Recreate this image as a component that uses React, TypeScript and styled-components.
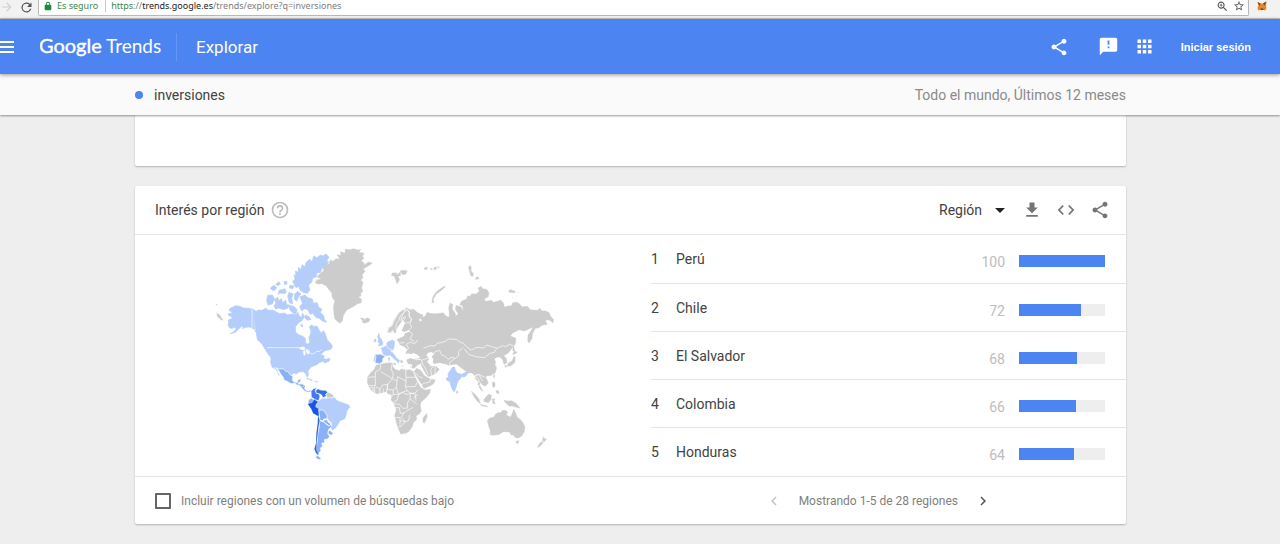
import React from "react";
import styled, { createGlobalStyle } from "styled-components";

const BLUE = "#4c84f1";

const GlobalStyle = createGlobalStyle`
  * { box-sizing: border-box; }
  body {
    margin: 0;
    background: #eeeeee;
    color: #424242;
    font-family: Roboto, "Liberation Sans", sans-serif;
    font-size: 14px;
    line-height: 20px;
  }
  button, select, input { font: inherit; color: inherit; }
`;

/* ---------- Browser bar ---------- */

const BrowserBar = styled.div`
  display: flex;
  height: 19px;
  padding-right: 11px;
  background: #f2f2f2;
  border-bottom: 1px solid #c6c6c6;
  font-family: "Noto Sans", sans-serif;
  font-size: 9px;
  line-height: 12px;
`;

const NavButtons = styled.div`
  display: flex;
  gap: 5px;
  width: 38px;
`;

const AddressBar = styled.div`
  display: flex;
  flex: 1;
  align-items: center;
  height: 16px;
  padding: 0 2px 3px 4px;
  background: #fff;
  border: solid #b8b8b8;
  border-width: 0 1px 1px;
  border-radius: 0 0 2px 2px;
  color: #808080;
`;

const Secure = styled.span`
  margin-left: 4px;
  padding-right: 7px;
  border-right: 1px solid #c8c8c8;
  color: #3c8a4a;
`;

const Url = styled.span`
  flex: 1;
  padding-left: 5px;
`;

const Scheme = styled.span`
  color: #3c8a4a;
`;

const LockBadge = styled.span`
  display: grid;
  color: #1e8a3c;
`;

const Host = styled.span`
  color: #222;
`;

const BarButton = styled.button`
  display: grid;
  place-items: center;
  width: 14px;
  height: 12px;
  padding: 0;
  border: 0;
  background: none;
  color: #555;

  &:disabled { color: #cfcfcf; }
`;

const BarTools = styled.div`
  display: flex;
  gap: 3px;
`;

const Extension = styled(BarButton)`
  margin-left: 6px;
`;

/* ---------- App header ---------- */

const Header = styled.header`
  position: relative;
  z-index: 2;
  display: flex;
  align-items: center;
  height: 55px;
  padding-right: 21px;
  background: ${BLUE};
  box-shadow: 0 1px 4px rgba(0, 0, 0, 0.4);
  color: #fff;
`;

const IconButton = styled.button<{ $size?: number }>`
  display: grid;
  place-items: center;
  width: ${(p) => p.$size ?? 24}px;
  height: ${(p) => p.$size ?? 24}px;
  padding: 0;
  border: 0;
  background: none;
  color: inherit;
  cursor: pointer;

  &:disabled { color: #c4c4c4; }
`;

const MenuButton = styled(IconButton)`
  width: 40px;
  justify-items: start;
`;

const Logo = styled.a`
  display: flex;
  align-items: center;
  width: 137px;
  height: 28px;
  border-right: 1px solid #6496f4;
  color: #fff;
  text-decoration: none;
`;

const Section = styled.h1`
  flex: 1;
  margin: 0;
  padding-left: 19px;
  font-size: 17px;
  font-weight: 400;
  line-height: 24px;
`;

const HeaderTools = styled.div`
  display: flex;
  align-items: center;
  gap: 12px;
`;

const ShareTool = styled(IconButton)`
  margin-right: 14px;
`;

const SignIn = styled.button`
  margin-left: 4px;
  padding: 6px 8px;
  border: 0;
  background: none;
  font-family: "Liberation Sans", Arial, sans-serif;
  font-size: 11px;
  font-weight: 700;
  line-height: 16px;
  cursor: pointer;
`;

/* ---------- Query strip and cards ---------- */

const QueryBar = styled.div`
  position: relative;
  z-index: 1;
  display: flex;
  align-items: center;
  justify-content: space-between;
  height: 41px;
  padding: 0 154px 0 135px;
  background: #fafafa;
  box-shadow: 0 1px 2px rgba(0, 0, 0, 0.4);
`;

const Term = styled.span`
  display: flex;
  align-items: center;
  gap: 11px;

  &::before {
    content: "";
    width: 8px;
    height: 8px;
    border-radius: 50%;
    background: ${BLUE};
  }
`;

const Scope = styled.span`
  color: #8a8a8a;
`;

const Main = styled.main`
  display: flex;
  flex-direction: column;
  gap: 20px;
  padding: 0 154px 20px 135px;
`;

const Card = styled.section`
  background: #fff;
  border-radius: 2px;
  box-shadow: 0 1px 2px rgba(0, 0, 0, 0.25);
`;

const ChartCardEnd = styled(Card)`
  height: 51px;
`;

const CardHeader = styled.div`
  display: flex;
  align-items: center;
  height: 49px;
  padding: 0 14px 0 20px;
  border-bottom: 1px solid #e4e4e4;
`;

const CardTitle = styled.h2`
  margin: 0 6px 0 0;
  font-size: 14px;
  font-weight: 400;
`;

const Help = styled(IconButton)`
  color: #bdbdbd;
`;

const CardTools = styled.div`
  display: flex;
  align-items: center;
  gap: 10px;
  margin-left: auto;
  color: #757575;
`;

const SelectBox = styled.label`
  display: grid;
  grid-template-columns: 1fr 10px;
  align-items: center;
  width: 66px;
  margin-right: 5px;
  color: #424242;
`;

const Select = styled.select`
  grid-area: 1 / 1 / 2 / 3;
  width: 100%;
  padding: 0;
  border: 0;
  appearance: none;
  background: none;
`;

const Caret = styled.span`
  grid-area: 1 / 2;
  border: 5px solid transparent;
  border-top-color: #222;
  border-bottom: 0;
  pointer-events: none;
`;

const CardBody = styled.div`
  display: grid;
  grid-template-columns: 516px 1fr;
  padding-bottom: 1px;
`;

const Map = styled.svg`
  display: block;
  width: 350px;
  height: 225px;
  margin: 5px 0 0 75px;
`;

const Ranking = styled.table`
  width: 100%;
  border-collapse: collapse;

  tr + tr { border-top: 1px solid #e4e4e4; }
  td { height: 48px; padding: 0; vertical-align: top; }
`;

const Rank = styled.td`
  width: 25px;
  && { padding-top: 14px; }
`;

const Region = styled.td`
  && { padding-top: 14px; }
`;

const Score = styled.td`
  width: 60px;
  color: #bdbdbd;
  text-align: right;
  && { padding: 17px 14px 0 0; }
`;

const BarCell = styled.td`
  width: 107px;
  && { padding: 20px 21px 0 0; }
`;

const Track = styled.div`
  height: 12px;
  background: #eeeeee;
`;

const Fill = styled.div`
  height: 12px;
  background: ${BLUE};
`;

const CardFooter = styled.div`
  display: flex;
  align-items: center;
  justify-content: space-between;
  height: 48px;
  padding: 0 131px 0 20px;
  border-top: 1px solid #e4e4e4;
  color: #808080;
  font-size: 12px;
`;

const CheckLabel = styled.label`
  display: flex;
  align-items: center;
  gap: 10px;
`;

const Checkbox = styled.input`
  width: 16px;
  height: 16px;
  margin: 0;
  border: 2px solid #666;
  border-radius: 1px;
  appearance: none;

  &:checked { background: ${BLUE}; }
`;

const Pager = styled.nav`
  display: flex;
  align-items: center;
  gap: 13px;
`;

const Next = styled(IconButton)`
  color: #555;
`;

/* ---------- Icons ---------- */

const Icon = ({ d, size = 24 }: { d: string; size?: number }) => (
  <svg width={size} height={size} viewBox="0 0 24 24" fill="currentColor" aria-hidden="true">
    <path d={d} />
  </svg>
);

const icons = {
  forward: "M12 4l-1.400 1.400L16.200 11H4v2h12.200l-5.600 5.600L12 20l8-8z",
  reload: "M17.650 6.350A8 8 0 1 0 19.730 14h-2.080A6 6 0 1 1 12 6c1.660 0 3.140.690 4.220 1.780L13 11h7V4z",
  lock: "M18 9h-1V7A5 5 0 0 0 7 7v2H6a2 2 0 0 0-2 2v9a2 2 0 0 0 2 2h12a2 2 0 0 0 2-2v-9a2 2 0 0 0-2-2zM9 9V7a3 3 0 0 1 6 0v2z",
  zoom: "M15.500 14h-.8l-.3-.3A6.500 6.500 0 1 0 13.700 14.400l.3.3v.8l5 5 1.500-1.500zM9.500 14a4.500 4.500 0 1 1 0-9 4.500 4.500 0 0 1 0 9zM8.700 7h1.600v1.700H12v1.600h-1.700V12H8.700v-1.700H7V8.700h1.700z",
  star: "M22 9.240l-7.190-.62L12 2 9.190 8.630 2 9.240l5.460 4.730L5.820 21 12 17.270 18.180 21l-1.630-7.030zM12 15.400l-3.760 2.270 1-4.280-3.320-2.880 4.380-.38L12 6.100l1.710 4.040 4.380.38-3.320 2.880 1 4.280z",
  share:
    "M18 16.080c-.76 0-1.440.3-1.960.77L8.910 12.700c.05-.23.09-.46.09-.7s-.04-.47-.09-.7l7.050-4.110c.54.5 1.250.81 2.040.81 1.660 0 3-1.340 3-3s-1.340-3-3-3-3 1.340-3 3c0 .24.04.47.09.7L8.040 9.810C7.500 9.310 6.790 9 6 9c-1.660 0-3 1.340-3 3s1.340 3 3 3c.79 0 1.500-.31 2.040-.81l7.120 4.160c-.05.21-.08.43-.08.65 0 1.610 1.310 2.920 2.920 2.920s2.920-1.310 2.920-2.920-1.310-2.920-2.920-2.920z",
  feedback: "M20 2H4c-1.100 0-2 .9-2 2v18l4-4h14c1.100 0 2-.9 2-2V4c0-1.100-.9-2-2-2zm-7 12h-2v-2h2zm0-4h-2V5h2z",
  apps: "M4 8h4V4H4zm6 12h4v-4h-4zm-6 0h4v-4H4zm0-6h4v-4H4zm6 0h4v-4h-4zm6-10v4h4V4zm-6 4h4V4h-4zm6 6h4v-4h-4zm0 6h4v-4h-4z",
  help: "M11 18h2v-2h-2zm1-16a10 10 0 1 0 0 20 10 10 0 0 0 0-20zm0 18a8 8 0 1 1 0-16 8 8 0 0 1 0 16zm0-14a4 4 0 0 0-4 4h2a2 2 0 1 1 4 0c0 2-3 1.750-3 5h2c0-2.250 3-2.500 3-5a4 4 0 0 0-4-4z",
  download: "M19 9h-4V3H9v6H5l7 7zM5 18v2h14v-2z",
  code: "M9.400 16.600L4.800 12l4.600-4.600L8 6l-6 6 6 6zm5.200 0l4.600-4.600-4.600-4.600L16 6l6 6-6 6z",
  prev: "M15.410 7.410L14 6l-6 6 6 6 1.410-1.410L10.830 12z",
  next: "M10 6L8.590 7.410 13.170 12l-4.580 4.590L10 18l6-6z",
};

const LogoText = styled.svg`
  width: 124px;
  height: 28px;
  font-family: Lato, sans-serif;
  font-size: 20px;
  fill: currentColor;
`;

const FoxIcon = () => (
  <svg width="10" height="10" viewBox="0 0 20 20" aria-hidden="true">
    <path d="M1 2l6 3h5l7-4-1 9 1 5-3 4-5-2H7l-5 2-1-6 2-4z" fill="#e8842c" />
    <path d="M1 2l6 3-2 5zM19 1l-7 4 3 4zM7 15h5l1 3H7z" fill="#70401e" />
  </svg>
);

/* ---------- World map, three units per pixel ---------- */

const LAND = "#cccccc";
const LIGHT = "#b4cdfa";
const MID = "#8ab0f6";

const WorldMap = () => (
  <Map viewBox="0 0 1050 675" role="img" aria-label="Interés por región" stroke="#fff" strokeWidth="2" strokeLinejoin="round">
    {/* Alaska and Canada */}
    <g fill={LIGHT}>
      <path stroke={LIGHT} d="M128 207l-14-2-13-1-12-5-13-2-8 5-8 3-2 7 8 4-1 4-10 1 2 6 10 4-3 5-9 4 1 9-2 7 5 8 7 1 8-3 4 4-5 8-13 8 16-5 10-10 9-8 5 1-3 6 10-4 10-1 9 3 8 7 8 9V278l-8-10z" />
      <path stroke={LIGHT} d="M128 207l10 7 8-4 9 1 12-6 9 6 13-1 10 6 11 5 13-2 9 5 16-2 10 3 5-10 5 14 7 3 2-12 7 9-8 13-11 7-9 12 1 16 9 7 11 4 9 7 1 14 7 4 6-8-4-11 5-11 2-10-5-12 6-6 9 5 8-2 7 13 5 8 8-7 6 12 5 16 10 10 5 8-7 10-16 5-14 8-9 9 15-5 7 3-4 6 9 4 12-3-2 8-14 6-5-5-9 3-11 8-15 5-9-7-4-13-14-6h-93l-12-15-9-15-7-12-14-13z" />
      <path fill="none" d="M126 206V268l10 2" />
      <path stroke={LIGHT} d="M356 318l5 2 4-4 1 9-8 4-9-2zM162 310l8 8 7 9-9-3z" />
      <path stroke={LIGHT} d="M248 125l7-8-3-13 6 3-2-14 8 4 2-16 7 8 3-15 8 6 5-14 11-8 6 7 5-17 10 5 10-8 8 3 9-6 9 9-7 13 6 2-9 12-12 8-3 11-11 2-3 12-10 4-3 12-9 7 1 12-10-4-4 11-8-8-4 4-7-11-5 6z" />
      <path stroke={LIGHT} d="M173 166l14-1 7 11-7 16-13 3-4-13zM194 179l9-8 3 11 9-6 2 12 10-7 3 13 9 1-5 9-14 5-14-5-9 3-5-9 6-9zM237 157l13 5-5 11 3 19-10-4-5-19zM254 162l9-8 10 8-8 9-5 13-7-7zM270 142l17 3 9-5 4 10-8 10-10-2-12-7zM270 170l15-5 9 8 13 4 3 12 12-1 3 13 11 7-5 9 10 10 2 11 7 9-12-3-10-9-10-2-9-13-9 3-6-14-10-3-9 7-6-13 8-10zM240 196l13 4 8 9-4 13-11-5-8-10zM181 144l11-8 8 7-7 9-8-3zM207 151l18-5 4 11-8 4-8-2-8 4zM222 125l8-2 1 9-7 2zM197 133l10-8 4 8-9 4zM240 136l13 2-5 8-10-2zM287 225l10 5 6 9-11 2-8-8zM274 252l5 5-2 4-5-4z" />
    </g>
    {/* United States, Mexico and Central America */}
    <g transform="translate(120 300)">
      <path fill={LIGHT} stroke={LIGHT} d="M53 25h98l14 7 10-2 4 7 6 8 8-2 7-5 8-1 4-6 7 4-4 7-9 8-7 1-4 10-5 5 1 8-8 8-9 10 1 13-3 7-6-12-6-5-15 1-3 5-12-2-7 9-8-9-9-3-12 1-11-7-10-4-7-5-4-13 1-17z" />
      <path fill="none" d="M51 23h99l15 8 11-2 5 12 8 1 10-7 10-1 7-6" />
      <path fill="#fff" d="M148 25l10-5 8 5-7 5zM160 34l4-2 2 11-4 3zM169 29l9 7-3 7-5-5z" />
      <path fill={MID} d="M74 83l14 4 11-1 8 7 7 2 7 10 8 4-2 11 6 7 8-1 5-8 8-1-3 8-5 3-2 6-12-4-9 1-12-7-9-4-3-9-7-9-6-11-7-7 8 19 4 9-7-7-2-8z" />
      <path fill={MID} d="M136 130l8-3 2 5 11 1 9 3-2 10 4 5 7 2 7-4 2 5-5 2-6 1-9-3-6-7-9-9-13-5z" />
      <path fill="#477fe9" d="M146 132l10 1 8 3-7 3-10-3z" />
      <path fill={LAND} d="M163 116l10-3 11 4 8 5-8 1-9-4zM194 122l12 2-2 4-12-1zM182 127l5 1-4 2z" />
      <path fill={LAND} d="M229 154l10 4 13 8-5 9-14 1-6-10z" />
      <path fill={LIGHT} d="M204 183l13-9 11 1 9-2 11 1 5-5 7 10 10 5 13 4 15 6 3 8-8 10-3 14-5 12-14 6-6 11-8 10-9 7-8-9 5-9-1-5-12-12-4-14-14-10-15-6-2-10z" />
      <path fill="#447bea" d="M183 154l7-8 10-3-4 9 4 8 8 2 2 9-4 12-10-4-12-7z" />
      <path fill="#356fe6" d="M197 152l7-6 8 4 15 1 6 6-6 6 2 6-10 4-5-9-7-3-8-1z" />
      <path fill={MID} d="M176 179l8-5 9 6-6 8-9 4-4-5z" />
      <path fill="#1955e3" stroke="#1955e3" strokeWidth="1" d="M174 192l12-3 7-10 10 6-6 9-1 7 10 7 1 15-2 5-15-8-6-14z" />
      <path fill={MID} d="M206 209l14 2 7 8 5 9-2 8-9 1-2 6-9-2zM221 240l10-1 4 8 8 4-4 8-10-8-8-5zM236 269l9 6 5 6-7 5-9-5z" />
      <path fill={MID} d="M208 242l12 3 9 8 8 5 7-5 1 6-9 9-3 13 6 8-5 8-11 2 1 9-9 2 3 8-7 7 2 7-6 7-1 9-7-5-2-12 4-22 2-25 5-24z" />
      <path fill="#2d67de" stroke="none" d="M204 226l5 14-3 18-3 23-3 26-1 23 6 14-7-5-5-12 5-18 1-29 4-30z" />
      <path fill={MID} d="M200 345l6 4 9 9-9 1-9-6z" />
    </g>
    {/* Aleutians */}
    <path fill={LAND} d="M18 217l13 7 4 9 5 4-3 7-8-7-8-7zM18 190l5 3-2 4-5-3z" />
    {/* Greenland, Iceland and the Arctic islands */}
    <g transform="translate(300)" fill={LAND} stroke={LAND} strokeWidth="1">
      <path d="M17 121l17-4-14-7 9-8 12-10-2-7 9-11 9-3 3-10 11 2 6-7 12 1-8-13 12 2-2-11 14 4 1-12 12 2 13-3 13 4 8-2-5 9 16 3-6 9 5 5-8 9 8 5 1 7 12-9 12 3-7 6-12 7-8 5 5 7-8 10 2 10-7 6 7 7-4 17 4 10-7 6 1 8-8 3 10 7-2 11-10 2-10 7-9 5-13 6-7 11-4 7-2 14-7 9-8-5-9-9-3-20-1-17 4-16-8-12-1-13-8-9-8-11-13-7-14 1-7-5 8-6z" />
      <path d="M151 235l9-1 3 5 8-6 9 4-3 8-14 5-8-5 4-3z" />
      <path d="M247 99l13-1-1 7 12-9 1 11-8 2 5 10-8 13-5-16-4-8-8-1zM270 93l10-2 12 2-5 10-10 1z" />
      <path d="M343 83l10-1-2 6-7 1zM360 87l5-2 2 5zM371 83l7-3 2 8-8 1zM382 80l6 1-3 4z" />
    </g>
    {/* Eurasia */}
    <path fill={LAND} stroke={LAND} strokeWidth="1" d="M532 278l3-15 10-5 6-16 9-14 8-12 13-7 9-6 10 6 12-1 8 8 11 6 8 2-2 10-10 3 1 7 8 0-3-10 13-6 5-11 10 3 14 1 15-1 10-2 8 10 9 4 1-11-2-18 4-14 8 4-1 15 9 12 1 8 8-6-9-14 2-12 15 4 6 14-1-17-9-3 6-11 14-5 3-9 10-2 3-6 14 1 9-9-4-9 10-5 4 7 12 2 7 10-2 12-12 7 4 7 18-3 5 6 14-4 8-3 9 10 2 11 14-4 7 1 4-10 13-1 7 4 8 9 16-1 9 10 10 1 12 1 6-6 8 8 9-1 12 6 3 9 10 12-2 10-10-8-9-2-3 5 5 9-15 3-12 8-9 1-8 15-2 16-9 13-4-7 1-17 8-11 7-12-12 4-7 5-9 2-13-4-20 10-7 9 10 4 7 3-2 17-12 15-9 12-14 9 8 6 2 14-9 5-5-15-8-7-8 1-8 4 4 10-2 9 5 8-4 15-14 9-10 0-6 5 6 9 3 8-9 10-8-4-6-7-3 8 10 18-6-3-9-17 1-9-10-11-3-11-9-5-9 1-35-27-22 4-9-3-19-5-15 3-9-4-8-7-7 3 6 9 9 6 12 0 11 10-4 6-9 8-19 8-7-6-9-16-8-16 5-12-12 2-13-2-8-6-1-12-8 6-7-8 4-12-9-8-13-6-8-12-1-31z" />
    <path fill="#fff" stroke="none" d="M543 293l14-20 9-16 12-17 9 5-6 13-6 15 9 2 13-5 1 5-13 5-3 8-14 7-10 3-6 6-11-4zM586 350l7-10 10 3 7-4 12 5 8 8-10 4-13 1-12 2zM654 338l10-2 8 5-7 9 5 8-2 13-10-3-2-14-7-9z" />
    <path fill={LAND} d="M533 276l3-13 10-5 7-18 13-21 11-9 9-2-6 13-9 6-4 14-8 10-1 14 2 10-6 8-6-13-6 10zM573 242l3-14 7-13 9-5 6 7 1 14 6 8-8 9-14 1-3-7 7-10-4-2z" />
    <path fill="none" d="M586 205l12 10-1 14 8 8-5 13 5 13-10 9 13 10-8 15 14 8M555 300l10 7-4 15 7 10 18 3 10-10-7-12 12-7 13 6 9-12M586 336l-16 10 13 13 9-4M640 325l20-8 15 1 6-8 24-5 10-8 25 1 8 8 13 4 10 12 13 8 16-8 22 2 8-9 12 4 19 6 17-8 9 3 11-7 11 4 6 13 13 6 10 2 4 11M759 322l-14 14 2 10-11 9-10-3-12 6-8-9-11-4-6-14-14 4-6 10M763 327l13 16 21 7 26 3 15-12 15-4 7-12M735 355l-17 13 4 14-8 7-9-13-15-6-17 4-11 15 4 22M712 382l9 11 21 2 14 10 20 0 17 5 13-7 12 20" />
    {/* New land north of Russia */}
    <path fill={LAND} d="M664 190l2-17 8-14 11-10 18-12 5 3-14 13-13 9-9 14 1 13zM774 82l7-8 5 10-2 8 8 9-2 10-9-2-3-12zM796 112l8-4 6 9-9 2-6 2zM895 151l8-4 7 4 8 2-3 7-10-1-9-1zM921 155l12 2-11 2zM906 172l5-1-2 5zM1018 192l5 1-3 3z" />
    {/* Western Europe */}
    <g transform="translate(450 270)">
      <path fill={LIGHT} stroke={LIGHT} strokeWidth="1" d="M52 20l5-11 2 12 6 7 4 11-2 6-13 4 4-8-5-8 3-5z" />
      <path fill={LIGHT} strokeWidth="1" d="M62 54l8-3 8-5 7 8 11 4-5 11 1 8-14 1-9-4zM79 38l9-6 9-3 8 5-1 14-4 13-13-2-7-10z" />
      <path fill={LAND} d="M41 29l7-5 2 10-9 6z" />
      <path fill="#fff" stroke="none" d="M70 82l16-4 9 5 13 17 13 8-1 8-22-6-13-8-9 2-11-4z" />
      <path fill={LIGHT} stroke={LIGHT} strokeWidth="1" d="M87 68l9-2 6 7 8 12 9 6-4 9-6-8-11-9-8-9zM99 101l9-1-2 5zM85 83l4 0 0 9-4-1z" />
      <path fill={MID} strokeWidth="1" d="M44 74l17-1 14 6-7 7-1 10-9 5-12-3-2-8z" />
      <path fill={LAND} d="M43 77l5 1-3 18-6-2z" />
      <path fill={LAND} d="M138 89l12-6 17 5 17 1 3 11-16 7-7 9-11 0 2-12-12-1z" />
      {/* Africa and Arabia */}
      <path fill={LAND} stroke={LAND} strokeWidth="1" d="M22 158l1-17 9-13 11-10 5-12 13-3 18-4 13-1 7 2-1 11 8 7 11 4 8-5 12 3 13-1 9 5 5 13 8 18 11 18 12 7 17-2-3 12-12 14-14 13-2 12 3 13-6 10-9 5 1 12-10 9-3 12-11 15-9 5-15 2-5-12-5-12-4-16-4-15 5-17-7-18-9-13 2-15-10-2-8-7-13 4-15 2-13-8-9-12z" />
      <path fill={LAND} d="M188 263l6-7 7-9 2 12-5 14-5 8-6-4z" />
      <path fill={LAND} d="M160 125l10-12 13 7 9 14 12 8 9 4 15 2-5 13-12 8-20 8-8-14-10-16z" />
      <path fill={LIGHT} stroke={LIGHT} strokeWidth="3" d="M264 132l8-11 5-8 7-1 1 9 7 9 14 4 8-6 10-1-5 9-8 5-4-3-8 9-7 9-3 11-6 18-5-5-5-14-3-12-8-2-3-7 7-4z" />
      <path fill={LAND} d="M290 179l6 7-4 7-5-6z" />
      <path fill="none" d="M25 142l21-2V126l16-9 0-14M46 140l0 28-23-2M62 125l35 21-14 17-15 2-8 12-12-6M97 100l-4 17 7 15-3 14 14 7 2-13 25 13V142l-1-26M138 142l29 0M111 153l-2 20-10 7-17-2 1-15M138 153l-2 17 5 12-14 5-11 6-7-20M136 170l30 0 5-13M141 182l11 8 14-1 8-10M99 180l1 13-9 13M100 193l16 0 11-6M116 193l-5 18-15 7M127 187l11 6 13-2M151 191l-1 16-8 12 1 15-15 1-10-12-20-3M150 207l20 15M152 190l14 2 2 20M98 233l20 0 3 17 11-1M103 263l17-1 0 25M132 249l12-9 16-8M132 249l-8 13 12 13 10-3 3-18M120 272l16 3-12 14-10 3M43 170l1 14 1 12M60 177l-1 17M70 176l0 17M28 172l11 2 0 14M160 205l14-12M83 163l-4 28" />
      <path fill="none" d="M165 127l13 14 10 2M180 167l12-7 17-4 4-11M187 100l9 15 9 19M187 90l21-7 8 12M208 109l18-4 18 7 14-9M226 105l-1 27 23 2 10-18 11-6M105 30l14 9 14-1M102 59l16 1 9-9M120 61l12 8 8-9M109 68l12 4 3 14M171 91l8-8-12-11" />
      <path fill={LAND} strokeWidth="1" d="M119 91l10 0 0 9-7-2zM124 106l9 2-8 2zM149 111l8-3-5 6z" />
    </g>
    {/* South-east Asia and Oceania */}
    <g transform="translate(720 300)" fill={LAND} stroke={LAND} strokeWidth="1">
      <path d="M112 242l7-8 13-3 5-9 10-5 4 2 6-8 10 0 6 5-4 9 13 6 5-11 4-12 6 11 5 13 10 7 7 9 6 13-2 14-8 13-9 6-10-1-7-9-5 2-6-10-18-1-14 9-19 2-7-3 1-11-5-13z" />
      <path d="M198 303l9-1-2 8-5 1zM281 290l3 6 6 1-9 10-4-7zM275 304l4 6-9 9-8 4 5-10z" />
      <path d="M64 154l11 9 12 14 4 14-10-8-9-13zM91 193l18 4 5 4-21-4zM101 179l14-16 9 2-1 14-8 9-12-3zM127 177l9-1-4 6 4 10-8-2zM162 180l10 3 13-1 12 7 14 16-12-3-12-4-9 1-13-12z" />
      <path d="M128 125l7 3 0 11-5 4-3-9zM138 151l8 1 1 9-7-2zM129 108l5-5-1 12zM174 70l12-7 6-14 4 2-1 16-12 10-11 2zM188 44l4-12 10 5-8 5zM190 12l4 20-6 0zM163 78l6-2 0 7z" />
      <path fill="none" stroke="#fff" strokeWidth="2" d="M58 111l9 8 4 12M67 119l8-9 9 5 8 17M74 108l10-5 20 8M84 137l12-4" />
    </g>
  </Map>
);

/* ---------- Page ---------- */

const regions = [
  { name: "Perú", score: 100 },
  { name: "Chile", score: 72 },
  { name: "El Salvador", score: 68 },
  { name: "Colombia", score: 66 },
  { name: "Honduras", score: 64 },
];

export default function App() {
  return (
    <>
      <GlobalStyle />
      <BrowserBar>
        <NavButtons>
          <BarButton aria-label="Adelante" disabled>
            <Icon d={icons.forward} size={14} />
          </BarButton>
          <BarButton aria-label="Recargar">
            <Icon d={icons.reload} size={15} />
          </BarButton>
        </NavButtons>
        <AddressBar>
          <LockBadge>
            <Icon d={icons.lock} size={10} />
          </LockBadge>
          <Secure>Es seguro</Secure>
          <Url>
            <Scheme>https</Scheme>://<Host>trends.google.es</Host>/trends/explore?q=inversiones
          </Url>
          <BarTools>
            <BarButton aria-label="Zoom">
              <Icon d={icons.zoom} size={13} />
            </BarButton>
            <BarButton aria-label="Favorito">
              <Icon d={icons.star} size={12} />
            </BarButton>
          </BarTools>
        </AddressBar>
        <Extension aria-label="Extensión">
          <FoxIcon />
        </Extension>
      </BrowserBar>

      <Header>
        <MenuButton aria-label="Menú">
          <svg width="14" height="12" viewBox="0 0 14 12" fill="currentColor" aria-hidden="true">
            <path d="M0 0h14v2H0zM0 5h14v2H0zM0 10h14v2H0z" />
          </svg>
        </MenuButton>
        <Logo href="#" aria-label="Google Trends">
          <LogoText>
            <text x="-1" y="20" strokeWidth="0.400" stroke="currentColor">Google</text>
            <text x="66" y="20" fontSize="19">Trends</text>
          </LogoText>
        </Logo>
        <Section>Explorar</Section>
        <HeaderTools>
          <ShareTool aria-label="Compartir">
            <Icon d={icons.share} size={20} />
          </ShareTool>
          <IconButton aria-label="Enviar comentarios">
            <Icon d={icons.feedback} size={21} />
          </IconButton>
          <IconButton aria-label="Aplicaciones">
            <Icon d={icons.apps} size={21} />
          </IconButton>
          <SignIn>Iniciar sesión</SignIn>
        </HeaderTools>
      </Header>

      <QueryBar>
        <Term>inversiones</Term>
        <Scope>Todo el mundo, Últimos 12 meses</Scope>
      </QueryBar>

      <Main>
        <ChartCardEnd />
        <Card>
          <CardHeader>
            <CardTitle>Interés por región</CardTitle>
            <Help $size={20} aria-label="Ayuda">
              <Icon d={icons.help} size={20} />
            </Help>
            <CardTools>
              <SelectBox>
                <Select aria-label="Nivel de detalle">
                  <option>Región</option>
                </Select>
                <Caret />
              </SelectBox>
              <IconButton aria-label="Descargar">
                <Icon d={icons.download} size={20} />
              </IconButton>
              <IconButton aria-label="Insertar">
                <Icon d={icons.code} size={20} />
              </IconButton>
              <IconButton aria-label="Compartir">
                <Icon d={icons.share} size={20} />
              </IconButton>
            </CardTools>
          </CardHeader>
          <CardBody>
            <WorldMap />
            <Ranking>
              <tbody>
                {regions.map((r, i) => (
                  <tr key={r.name}>
                    <Rank>{i + 1}</Rank>
                    <Region>{r.name}</Region>
                    <Score>{r.score}</Score>
                    <BarCell>
                      <Track>
                        <Fill style={{ width: `${r.score}%` }} />
                      </Track>
                    </BarCell>
                  </tr>
                ))}
              </tbody>
            </Ranking>
          </CardBody>
          <CardFooter>
            <CheckLabel>
              <Checkbox type="checkbox" />
              Incluir regiones con un volumen de búsquedas bajo
            </CheckLabel>
            <Pager aria-label="Páginas">
              <IconButton aria-label="Anterior" disabled>
                <Icon d={icons.prev} size={18} />
              </IconButton>
              <span>Mostrando 1-5 de 28 regiones</span>
              <Next aria-label="Siguiente">
                <Icon d={icons.next} size={18} />
              </Next>
            </Pager>
          </CardFooter>
        </Card>
      </Main>
    </>
  );
}
